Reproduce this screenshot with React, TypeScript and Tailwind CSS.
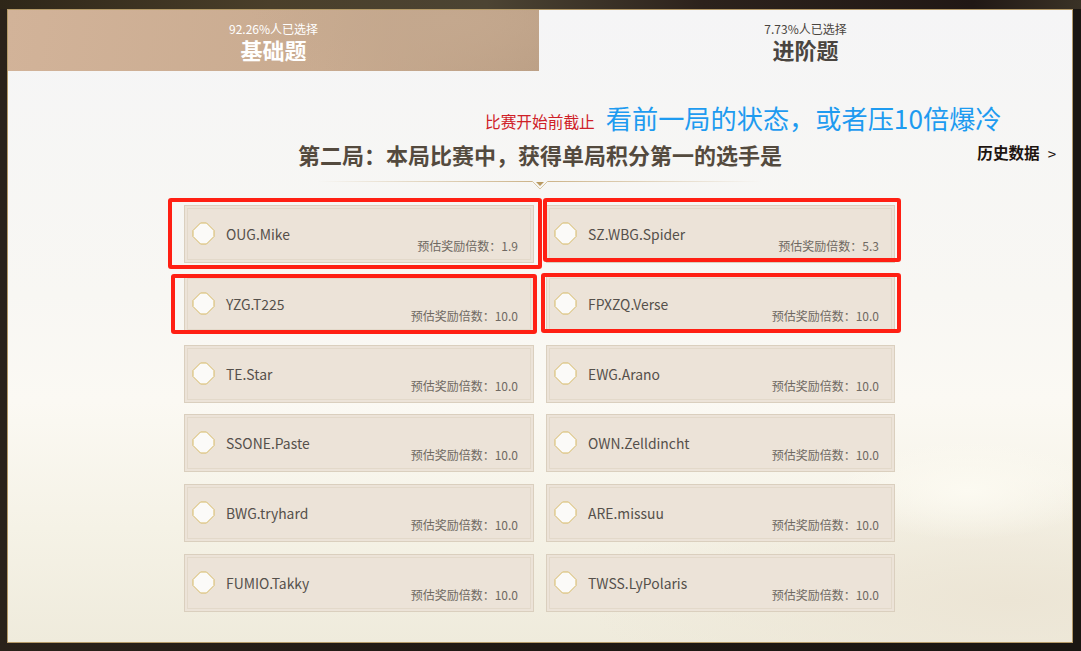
import React from 'react';

const sans = { fontFamily: '"Noto Sans CJK SC", sans-serif' };
const serif = { fontFamily: '"Liberation Serif", "Noto Sans CJK SC", serif' };

const players: { name: string; odds: string }[] = [
  { name: 'OUG.Mike', odds: '1.9' },
  { name: 'SZ.WBG.Spider', odds: '5.3' },
  { name: 'YZG.T225', odds: '10.0' },
  { name: 'FPXZQ.Verse', odds: '10.0' },
  { name: 'TE.Star', odds: '10.0' },
  { name: 'EWG.Arano', odds: '10.0' },
  { name: 'SSONE.Paste', odds: '10.0' },
  { name: 'OWN.Zelldincht', odds: '10.0' },
  { name: 'BWG.tryhard', odds: '10.0' },
  { name: 'ARE.missuu', odds: '10.0' },
  { name: 'FUMIO.Takky', odds: '10.0' },
  { name: 'TWSS.LyPolaris', odds: '10.0' },
];

const Diamond = () => (
  <svg width="23" height="23" viewBox="0 0 23 23" className="shrink-0">
    <path
      d="M8.5 1h6L22 8.5v6L14.5 22h-6L1 14.5v-6z"
      fill="#fbfaf8"
      stroke="#d6b964"
      strokeWidth="1"
      strokeLinejoin="round"
    />
  </svg>
);

const PlayerCard = ({ name, odds }: { name: string; odds: string }) => (
  <div className="relative h-[58px] border border-[#dacfbe] bg-[#ece3d8] p-[2px]">
    <div className="flex h-full items-start border border-[#e3d9ca] pl-[4px] pt-[13px]">
      <Diamond />
      <span className="ml-[11px] mt-[2px] text-[13.9px] leading-[20px] text-[#55504b]">{name}</span>
    </div>
    <span className="absolute right-[15px] top-[31px] text-[12px] leading-[18px] text-[#6f6962]">
      预估奖励倍数：{odds}
    </span>
  </div>
);

export default function App() {
  return (
    <div
      className="relative h-[651px] w-[1081px] overflow-hidden bg-[linear-gradient(90deg,#2a221a_0%,#1f1813_50%,#1a1612_100%)] pb-[8px] pl-[7px] pr-[8px] pt-[9px]"
      style={sans}
    >
      {/* Backdrop strip above the panel */}
      <div className="absolute inset-x-0 top-0 h-[9px] bg-[linear-gradient(90deg,#2e2618_0%,#4a3f2a_25%,#4c4433_45%,#2c221c_65%,#211815_90%,#3a3226_100%)]" />

      <div className="relative h-[634px] border border-[#b59a68] bg-[radial-gradient(ellipse_130px_50px_at_960px_480px,#fcfaf1_0%,transparent_100%),radial-gradient(ellipse_420px_120px_at_1000px_590px,#ece5d5_0%,transparent_100%),linear-gradient(180deg,#f5f5f6_0%,#f8f7f3_45%,#fbf9f3_62%,#f5f2e6_82%,#efebdc_100%)]">
        {/* Tabs */}
        <div className="flex h-[61px]">
          <div className="flex w-[531px] flex-col items-center bg-[radial-gradient(ellipse_200px_70px_at_440px_10px,#c4a88e_0%,transparent_100%),linear-gradient(100deg,#d2b399_0%,#c9ab90_60%,#bb9f85_100%)] pt-[10px] text-white">
            <span className="text-[12px] leading-[18px]">92.26%人已选择</span>
            <span className="text-[22px] font-bold leading-[27px]" style={serif}>基础题</span>
          </div>
          <div className="flex flex-1 flex-col items-center pt-[10px] text-[#4a4540]">
            <span className="text-[12px] leading-[18px]">7.73%人已选择</span>
            <span className="text-[22px] font-bold leading-[27px]" style={serif}>进阶题</span>
          </div>
        </div>

        {/* Deadline + annotation */}
        <div className="mt-[29px] flex h-[36px] items-center pl-[477px]">
          <span className="mt-[8px] text-[15.7px] leading-[20px] text-[#cf2027]">比赛开始前截止</span>
          <span className="ml-[11px] text-[26.2px] leading-[36px] text-[#1e9bf0]">看前一局的状态，或者压10倍爆冷</span>
        </div>

        {/* Question title */}
        <div className="relative mt-[4px] flex h-[34px] items-center justify-center">
          <h1 className="text-[22px] font-bold leading-[30px] text-[#544a3e]" style={serif}>
            第二局：本局比赛中，获得单局积分第一的选手是
          </h1>
          <span className="absolute right-[16px] top-[4px] flex items-center text-[15.6px] font-bold leading-[20px] text-[#1d1410]" style={serif}>
            历史数据
            <span className="ml-[8px] text-[15px] font-normal" style={sans}>&gt;</span>
          </span>
        </div>

        {/* Divider */}
        <div className="relative mx-auto mt-[7px] h-[9px] w-[444px]">
          <div className="absolute left-0 right-[230px] top-0 h-px bg-[linear-gradient(90deg,transparent,#cdb48a)]" />
          <div className="absolute left-[230px] right-0 top-0 h-px bg-[linear-gradient(90deg,#cdb48a,transparent)]" />
          <svg width="18" height="10" viewBox="0 0 18 10" className="absolute left-[213px] top-0">
            <path d="M1 0l8 8 8-8" fill="none" stroke="#d8c6a3" />
            <path d="M5 1h8l-4 4z" fill="#b99a62" />
          </svg>
        </div>

        {/* Options */}
        <div className="ml-[176px] mt-[15px] grid w-[711px] grid-cols-[350px_349px] gap-x-[12px] gap-y-[11.8px]">
          {players.map((p) => (
            <PlayerCard key={p.name} name={p.name} odds={p.odds} />
          ))}
        </div>
      </div>

      {/* Red marker boxes */}
      <div className="absolute left-[168px] top-[198px] h-[71px] w-[374px] rounded-[3px] border-[4px] border-[#ff1f13]" />
      <div className="absolute left-[543px] top-[198px] h-[64px] w-[358px] rounded-[3px] border-[4px] border-[#ff1f13]" />
      <div className="absolute left-[171px] top-[274px] h-[60px] w-[366px] rounded-[3px] border-[4px] border-[#ff1f13]" />
      <div className="absolute left-[541px] top-[273px] h-[60px] w-[360px] rounded-[3px] border-[4px] border-[#ff1f13]" />
    </div>
  );
}
